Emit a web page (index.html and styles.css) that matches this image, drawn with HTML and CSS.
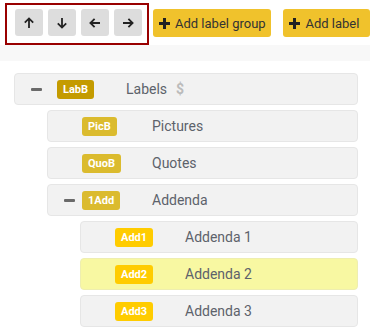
FILE: index.html
```html
<!DOCTYPE html>
<html lang="en">
<head>
  <meta charset="UTF-8" />
  <meta name="viewport" content="width=device-width, initial-scale=1.0"/>
  <title>Label Tree</title>
  <link rel="stylesheet" href="styles.css">
</head>
<body>
  <div class="toolbar">
    <div class="moveGroup">
      <button class="moveBtn" title="Up">
        <svg width="12" height="12" viewBox="0 0 12 12"><path d="M6 11V1.5M1.8 5.6L6 1.4l4.2 4.2" fill="none" stroke="#222" stroke-width="1.8"/></svg>
      </button>
      <button class="moveBtn" title="Down">
        <svg width="12" height="12" viewBox="0 0 12 12"><path d="M6 1v9.5M1.8 6.4L6 10.6l4.2-4.2" fill="none" stroke="#222" stroke-width="1.8"/></svg>
      </button>
      <button class="moveBtn" title="Left">
        <svg width="12" height="12" viewBox="0 0 12 12"><path d="M11 6H1.5M5.6 1.8L1.4 6l4.2 4.2" fill="none" stroke="#222" stroke-width="1.8"/></svg>
      </button>
      <button class="moveBtn" title="Right">
        <svg width="12" height="12" viewBox="0 0 12 12"><path d="M1 6h9.5M6.4 1.8L10.6 6l-4.2 4.2" fill="none" stroke="#222" stroke-width="1.8"/></svg>
      </button>
    </div>
    <button class="addBtn"><span class="plus"></span>Add label group</button>
    <button class="addBtn addLabel"><span class="plus"></span>Add label</button>
  </div>
  <div class="band"></div>

  <ul class="tree">
    <li>
      <div class="row root">
        <span class="toggle"><span class="minus"></span></span>
        <span class="badgeSlot"><span class="badge dark">LabB</span></span>
        <span class="name">Labels</span><span class="dollar">$</span>
      </div>
      <ul class="tree sub">
        <li>
          <div class="row">
            <span class="toggle"></span>
            <span class="badgeSlot"><span class="badge">PicB</span></span>
            <span class="name">Pictures</span>
          </div>
        </li>
        <li>
          <div class="row">
            <span class="toggle"></span>
            <span class="badgeSlot"><span class="badge">QuoB</span></span>
            <span class="name">Quotes</span>
          </div>
        </li>
        <li>
          <div class="row">
            <span class="toggle"><span class="minus"></span></span>
            <span class="badgeSlot"><span class="badge">1Add</span></span>
            <span class="name">Addenda</span>
          </div>
          <ul class="tree sub">
            <li>
              <div class="row">
                <span class="toggle"></span>
                <span class="badgeSlot"><span class="badge bright">Add1</span></span>
                <span class="name">Addenda 1</span>
              </div>
            </li>
            <li>
              <div class="row selected">
                <span class="toggle"></span>
                <span class="badgeSlot"><span class="badge bright">Add2</span></span>
                <span class="name">Addenda 2</span>
              </div>
            </li>
            <li>
              <div class="row">
                <span class="toggle"></span>
                <span class="badgeSlot"><span class="badge bright">Add3</span></span>
                <span class="name">Addenda 3</span>
              </div>
            </li>
          </ul>
        </li>
      </ul>
    </li>
  </ul>
</body>
</html>
```

FILE: styles.css
```css
body {
  margin: 0;
  font-family: Roboto, "Liberation Sans", sans-serif;
  background: #fff;
  color: #333;
}
button {
  font-family: inherit;
  border: none;
  cursor: pointer;
}
.toolbar {
  display: flex;
  align-items: flex-start;
  padding: 3px 0 0 5px;
  height: 42px;
}
.moveGroup {
  display: flex;
  gap: 5px;
  border: 2px solid #990000;
  padding: 4px 5px 7px 8px;
}
.moveBtn {
  width: 28px;
  height: 27px;
  background: #dddddd;
  border-radius: 3px;
  display: flex;
  align-items: center;
  justify-content: center;
  padding: 0;
}
.addBtn {
  margin-top: 6px;
  margin-left: 4px;
  height: 28px;
  width: 119px;
  background: #f0c22c;
  border-radius: 3px;
  font-size: 13px;
  color: #333;
  display: flex;
  align-items: center;
  padding: 0 0 0 6px;
}
.addLabel {
  margin-left: 12px;
  width: 87px;
}
.plus {
  position: relative;
  width: 11px;
  height: 11px;
  margin-right: 5px;
}
.plus::before,
.plus::after {
  content: "";
  position: absolute;
  background: #222;
}
.plus::before {
  left: 0;
  top: 4px;
  width: 11px;
  height: 3px;
}
.plus::after {
  left: 4px;
  top: 0;
  width: 3px;
  height: 11px;
}
.band {
  height: 16px;
  background: #f8f8f8;
}
.tree {
  list-style: none;
  margin: 0;
  padding: 7px 12px 0 14px;
}
.tree.sub {
  padding: 0 0 0 33px;
}
.row {
  display: flex;
  align-items: center;
  height: 30px;
  margin-top: 5px;
  background: #f2f2f2;
  border: 1px solid #e6e6e6;
  border-radius: 4px;
  padding-left: 16px;
  font-size: 14px;
  color: #5d626b;
}
.row.selected {
  background: #f8f8a2;
  border-color: #eeeeb0;
}
.toggle {
  width: 18px;
  display: flex;
}
.root .toggle {
  width: 26px;
}
.minus {
  width: 11px;
  height: 3px;
  background: #6a6a6a;
  border-radius: 1px;
}
.badgeSlot {
  width: 70px;
  display: flex;
}
.root .badgeSlot {
  width: 69px;
}
.badge {
  display: inline-block;
  height: 19px;
  line-height: 19px;
  padding: 0 6px;
  border-radius: 3px;
  background: #dbbb2e;
  color: #fff;
  font-size: 11px;
  font-weight: bold;
}
.badge.dark {
  background: #c49b00;
}
.badge.bright {
  background: #ffcc00;
}
.dollar {
  margin-left: 9px;
  color: #bbbbbb;
  font-weight: bold;
  font-size: 14px;
}
```
